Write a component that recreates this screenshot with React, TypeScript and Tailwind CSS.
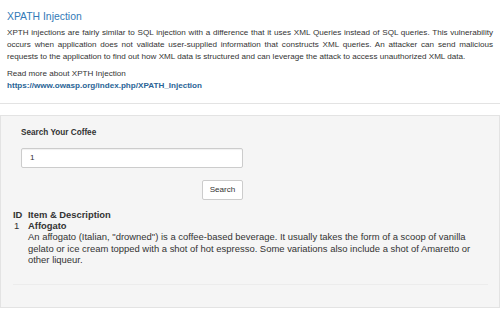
export default function App() {
  return (
    <div className="w-[500px] h-[312px] overflow-hidden bg-white font-['Liberation_Sans',Arial,sans-serif] text-[#333]">
      <div className="h-[104px] border-b border-[#e3e3e3] px-[7px] pt-[11px]">
        <h4 className="text-[10.4px] leading-[12px] text-[#337ab7]">XPATH Injection</h4>
        <p className="mt-[4.4px] text-justify text-[8.1px] leading-[11.6px]">
          XPTH injections are fairly similar to SQL injection with a difference that it uses XML Queries instead of SQL
          queries. This vulnerability occurs when application does not validate user-supplied information that
          constructs XML queries. An attacker can send malicious requests to the application to find out how XML data
          is structured and can leverage the attack to access unauthorized XML data.
        </p>
        <p className="mt-[6.2px] text-[8.1px] leading-[11.6px]">
          Read more about XPTH Injection
          <br />
          <a className="font-bold text-[#2a6496]">https://www.owasp.org/index.php/XPATH_Injection</a>
        </p>
      </div>

      <div className="mt-[11px] h-[193px] border border-[#e3e3e3] bg-[#f5f5f5] px-[12px] pt-[11px]">
        <div className="w-[230px] pl-[8px]">
          <label className="block text-[8.2px] font-bold leading-[11.6px]">Search Your Coffee</label>
          <div className="mt-[9px] flex h-[20px] items-center rounded-[2px] border border-[#ccc] bg-white px-[8px] text-[8.1px] shadow-[inset_0_1px_1px_rgba(0,0,0,0.06)]">
            1
          </div>
          <div className="mt-[12px] flex justify-end">
            <button className="h-[20px] w-[41px] rounded-[2px] border border-[#ccc] bg-white text-[8.1px] text-[#333]">
              Search
            </button>
          </div>
        </div>

        <div className="mt-[9px] leading-[11.3px]">
          <div className="grid w-[475px] grid-cols-[15px_1fr] border-b border-[#ececec] pb-[18px]">
            <div className="text-[9.4px] font-bold">ID</div>
            <div className="text-[9.4px] font-bold">Item &amp; Description</div>
            <div className="pl-[1px] text-[9.5px]">1</div>
            <div>
              <div className="text-[9.4px] font-bold">Affogato</div>
              <div className="pr-[10px] text-[9.45px] leading-[11.5px]">
                An affogato (Italian, "drowned") is a coffee-based beverage. It usually takes the form of a scoop of
                vanilla gelato or ice cream topped with a shot of hot espresso. Some variations also include a shot of
                Amaretto or other liqueur.
              </div>
            </div>
          </div>
        </div>
      </div>
    </div>
  );
}
